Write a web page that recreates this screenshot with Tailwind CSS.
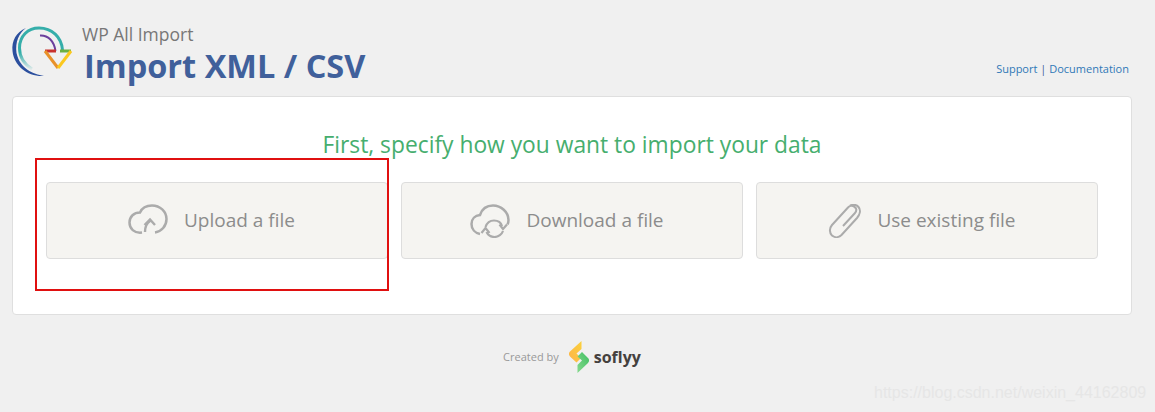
<!DOCTYPE html>
<html lang="en">
<head>
  <meta charset="UTF-8">
  <title>WP All Import</title>
  <script src="https://cdn.jsdelivr.net/npm/@tailwindcss/browser@4"></script>
</head>
<body class="relative h-[412px] w-[1155px] overflow-hidden bg-[#f0f0f0] font-['Open_Sans',sans-serif]">
  <!-- header -->
  <header class="flex h-[96px] pl-[6px] pr-[26px]">
    <svg class="mt-[21px] h-[65px] w-[75px] shrink-0" viewBox="0 0 75 65" fill="none">
      <defs>
        <linearGradient id="tealFade" x1="0" y1="0" x2="0" y2="1">
          <stop offset="0.6" stop-color="#35aeaa"/>
          <stop offset="1" stop-color="#35aeaa" stop-opacity="0.1"/>
        </linearGradient>
      </defs>
      <path d="M20 7C10 11 5.500 20 6.500 30C8 45 22 56 38 55C27 53 14 48 10.500 32C9 21 13 12 20 7Z" fill="#2b4f9e"/>
      <path d="M26 48C18 43 13.500 35 13.500 27C13.500 15 22 7 33 7C46 7 55.500 16 56.500 29" stroke="url(#tealFade)" stroke-width="3"/>
      <path d="M34 14.500C42 14 48 20 49.500 30" stroke="#6b3f9c" stroke-width="2"/>
      <path d="M39 30H50" stroke="#c8322f" stroke-width="3"/>
      <path d="M54 30H65" stroke="#6cb043" stroke-width="3"/>
      <path d="M39 30L52 47" stroke="#e8912a" stroke-width="3"/>
      <path d="M65 30L52 47" stroke="#fbc81e" stroke-width="3"/>
    </svg>
    <div class="ml-[1px] mt-[22px]">
      <div class="text-[17.5px] leading-[24px] text-[#777777]">WP All Import</div>
      <h1 class="ml-[2px] text-[32.5px] leading-[40px] font-bold text-[#40609b]">Import XML / CSV</h1>
    </div>
    <div class="ml-auto mt-[61px] text-[11px] leading-[16px] text-[#40609b]"><a class="text-[#2f78b7]">Support</a> | <a class="text-[#2f78b7]">Documentation</a></div>
  </header>

  <!-- import card -->
  <main class="mx-[12px] h-[219px] w-[1120px] rounded-[4px] border border-[#dfdfdf] bg-white px-[33px] pt-[32px]">
    <h2 class="text-center text-[22.8px] leading-[32px] text-[#46ae6e]">First, specify how you want to import your data</h2>
    <div class="mt-[21px] grid w-[1052px] grid-cols-3 gap-[13px]">
      <div class="flex h-[77px] items-center justify-center gap-[16px] rounded-[4px] border border-[#dddddd] bg-[#f5f4f1] pr-[11px] text-[19px] text-[#8c8c8c]">
        <svg class="mb-[3px] h-[30px] w-[40px]" viewBox="0 0 40 30" fill="none" stroke="#ababab" stroke-width="2.500">
          <path d="M14 28.500C6 29.500 1.500 24.500 1.500 18.500C1.500 12.500 6 8.500 12 8.500C14 4 19 1.500 24 1.500C32 1.500 38.500 7.500 38.500 15C38.500 22 33.500 27.500 27 28.500"/>
          <path d="M17 28C17 23 19 19 22 17M16.500 21L22 15.500L27 21" stroke-width="2.400"/>
        </svg>
        <span>Upload a file</span>
      </div>
      <div class="flex h-[77px] items-center justify-center gap-[16px] rounded-[4px] border border-[#dddddd] bg-[#f5f4f1] pr-[10px] text-[19px] text-[#8c8c8c]">
        <svg class="h-[34px] w-[40px]" viewBox="0 0 40 34" fill="none" stroke="#ababab" stroke-width="2.500">
          <path d="M10 30C5 29 1.500 25 1.500 20C1.500 15 5 11.500 10 11C12 5 17 1.500 23 1.500C31 1.500 38.500 8 38.500 16C38.500 18 38 19.500 37.500 20.500"/>
          <path d="M15.500 23C17 18.500 20.500 16.500 24 16.500C28 16.500 31 18.500 32 22M16.500 28C18 31 21 33 24.500 33C28.500 33 32 30 33 27" stroke-width="2.200"/>
          <path d="M29.500 20.500L33 25L37 20.500M11.500 29L15.500 24L19.500 29" stroke-width="2.200"/>
        </svg>
        <span>Download a file</span>
      </div>
      <div class="flex h-[77px] items-center justify-center gap-[16px] rounded-[4px] border border-[#dddddd] bg-[#f5f4f1] pr-[10px] text-[19px] text-[#8c8c8c]">
        <svg class="h-[34px] w-[33px]" viewBox="0 0 33 34" fill="none" stroke="#ababab" stroke-width="2">
          <path d="M15 22L27 9C29 6.500 28.500 4 26.500 3C24.500 1.500 22 1.500 20 3.500L4 21C1 24.500 1.500 29 4 31.500C7 34 11 33.500 13.500 31L29 14C32 10.500 33 6 30.500 3C28.500 0.500 25 0.500 22 1.500"/>
        </svg>
        <span>Use existing file</span>
      </div>
    </div>
  </main>

  <!-- footer -->
  <footer class="mt-[26px] flex h-[32px] items-center justify-center pr-[11px]">
    <span class="text-[11px] text-[#999999]">Created by</span>
    <svg class="ml-[10px] h-[32px] w-[20px]" viewBox="0 0 20 32">
      <defs>
        <linearGradient id="sfYellow" x1="0" y1="1" x2="1" y2="0">
          <stop offset="0" stop-color="#fdb44a"/>
          <stop offset="1" stop-color="#fbd13c"/>
        </linearGradient>
        <linearGradient id="sfGreen" x1="1" y1="0" x2="0" y2="1">
          <stop offset="0" stop-color="#3fbf62"/>
          <stop offset="1" stop-color="#86d98d"/>
        </linearGradient>
      </defs>
      <path d="M12.500 0L1 10.500C-0.500 12 -0.500 14 1 15.500L7.500 21.500L12 17L7.500 12.500L12.500 8Z" fill="url(#sfYellow)"/>
      <path d="M8.500 32L19 22C20.500 20.500 20.500 18.500 19 17L13 11L8.500 15.500L13 19.500L8.500 24Z" fill="url(#sfGreen)"/>
    </svg>
    <span class="ml-[5px] text-[16px] font-bold text-[#45413e]">soflyy</span>
  </footer>

  <!-- annotation drawn over the page -->
  <div class="absolute left-[35px] top-[158px] h-[133px] w-[354px] border-2 border-[#e01010]"></div>
  <div class="absolute left-[874px] top-[383px] font-['Liberation_Sans',sans-serif] text-[16px] leading-[20px] text-[#e6e6e6]">https://blog.csdn.net/weixin_44162809</div>
</body>
</html>
